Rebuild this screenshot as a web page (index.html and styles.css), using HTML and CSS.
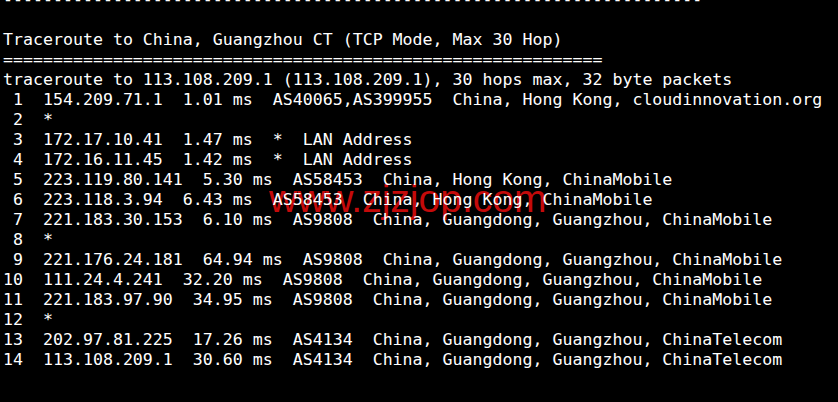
FILE: index.html
```html
<!DOCTYPE html>
<html>
<head>
<meta charset="utf-8">
<link rel="stylesheet" href="styles.css">
</head>
<body>
<div class="terminal">
<div class="watermark">www.zjzjop.com</div>
<pre class="output">----------------------------------------------------------------------

Traceroute to China, Guangzhou CT (TCP Mode, Max 30 Hop)
============================================================
traceroute to 113.108.209.1 (113.108.209.1), 30 hops max, 32 byte packets
 1  154.209.71.1  1.01 ms  AS40065,AS399955  China, Hong Kong, cloudinnovation.org
 2  *
 3  172.17.10.41  1.47 ms  *  LAN Address
 4  172.16.11.45  1.42 ms  *  LAN Address
 5  223.119.80.141  5.30 ms  AS58453  China, Hong Kong, ChinaMobile
 6  223.118.3.94  6.43 ms  AS58453  China, Hong Kong, ChinaMobile
 7  221.183.30.153  6.10 ms  AS9808  China, Guangdong, Guangzhou, ChinaMobile
 8  *
 9  221.176.24.181  64.94 ms  AS9808  China, Guangdong, Guangzhou, ChinaMobile
10  111.24.4.241  32.20 ms  AS9808  China, Guangdong, Guangzhou, ChinaMobile
11  221.183.97.90  34.95 ms  AS9808  China, Guangdong, Guangzhou, ChinaMobile
12  *
13  202.97.81.225  17.26 ms  AS4134  China, Guangdong, Guangzhou, ChinaTelecom
14  113.108.209.1  30.60 ms  AS4134  China, Guangdong, Guangzhou, ChinaTelecom</pre>
</div>
</body>
</html>
```
FILE: styles.css
```css
html, body {
  margin: 0;
  padding: 0;
  background: #000;
  width: 838px;
  height: 402px;
  overflow: hidden;
}
.terminal {
  position: relative;
  width: 838px;
  height: 402px;
  background: #000;
  overflow: hidden;
}
.output {
  position: relative;
  z-index: 1;
  margin: -10px 0 0 0;
  padding: 0 0 0 3px;
  font-family: "DejaVu Sans Mono", monospace;
  font-size: 16.6px;
  line-height: 20px;
  color: #fff;
  white-space: pre;
}
.watermark {
  position: absolute;
  left: 269px;
  top: 176px;
  z-index: 0;
  font-family: "Liberation Sans", Arial, sans-serif;
  font-size: 39px;
  line-height: 45px;
  color: #c40a0a;
  white-space: nowrap;
}
```
